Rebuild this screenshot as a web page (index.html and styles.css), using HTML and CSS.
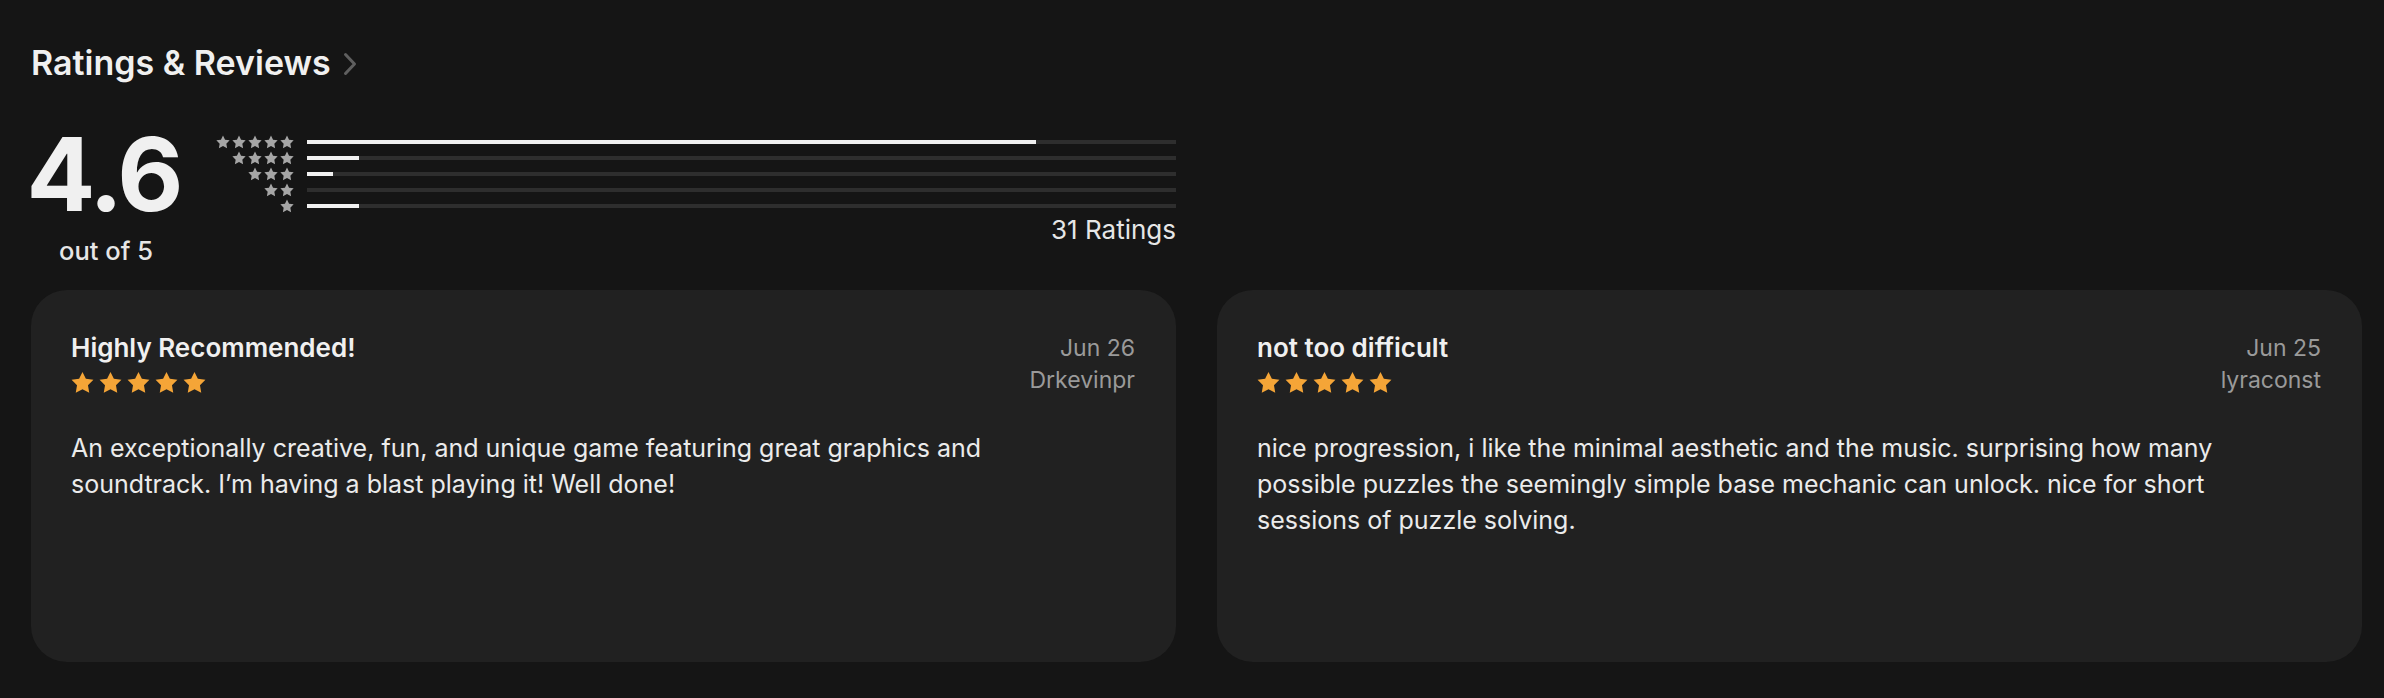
FILE: index.html
```html
<!DOCTYPE html>
<html>
  <head>
    <title>Ratings &amp; Reviews</title>
    <link rel="stylesheet" href="styles.css">
  </head>
  <body>
    <!-- header -->
    <h2 class="section-title">
      Ratings &amp; Reviews
      <svg class="chevron" width="14" height="24" viewBox="0 0 14 24">
        <polyline points="2.5,2.5 11.5,12 2.5,21.5" fill="none" stroke="#5f5f5f" stroke-width="3" stroke-linecap="round" stroke-linejoin="round"/>
      </svg>
    </h2>

    <!-- summary -->
    <div class="summary">
      <div class="score">
        <div class="score-value">4.6</div>
        <div class="score-label">out of 5</div>
      </div>
      <div class="histogram">
        <div class="hist-row">
          <div class="hist-stars">
            <svg class="g-star" viewBox="0 0 24 24"><path d="M12 1l3.53 7.15 7.88.99-5.7 5.71 1.34 7.86L12 19l-7.05 3.71 1.34-7.86-5.7-5.71 7.88-.99z"/></svg>
            <svg class="g-star" viewBox="0 0 24 24"><path d="M12 1l3.53 7.15 7.88.99-5.7 5.71 1.34 7.86L12 19l-7.05 3.71 1.34-7.86-5.7-5.71 7.88-.99z"/></svg>
            <svg class="g-star" viewBox="0 0 24 24"><path d="M12 1l3.53 7.15 7.88.99-5.7 5.71 1.34 7.86L12 19l-7.05 3.71 1.34-7.86-5.7-5.71 7.88-.99z"/></svg>
            <svg class="g-star" viewBox="0 0 24 24"><path d="M12 1l3.53 7.15 7.88.99-5.7 5.71 1.34 7.86L12 19l-7.05 3.71 1.34-7.86-5.7-5.71 7.88-.99z"/></svg>
            <svg class="g-star" viewBox="0 0 24 24"><path d="M12 1l3.53 7.15 7.88.99-5.7 5.71 1.34 7.86L12 19l-7.05 3.71 1.34-7.86-5.7-5.71 7.88-.99z"/></svg>
          </div>
          <div class="bar"><div class="bar-fill" style="width: 83.9%;"></div></div>
        </div>
        <div class="hist-row">
          <div class="hist-stars">
            <svg class="g-star" viewBox="0 0 24 24"><path d="M12 1l3.53 7.15 7.88.99-5.7 5.71 1.34 7.86L12 19l-7.05 3.71 1.34-7.86-5.7-5.71 7.88-.99z"/></svg>
            <svg class="g-star" viewBox="0 0 24 24"><path d="M12 1l3.53 7.15 7.88.99-5.7 5.71 1.34 7.86L12 19l-7.05 3.71 1.34-7.86-5.7-5.71 7.88-.99z"/></svg>
            <svg class="g-star" viewBox="0 0 24 24"><path d="M12 1l3.53 7.15 7.88.99-5.7 5.71 1.34 7.86L12 19l-7.05 3.71 1.34-7.86-5.7-5.71 7.88-.99z"/></svg>
            <svg class="g-star" viewBox="0 0 24 24"><path d="M12 1l3.53 7.15 7.88.99-5.7 5.71 1.34 7.86L12 19l-7.05 3.71 1.34-7.86-5.7-5.71 7.88-.99z"/></svg>
          </div>
          <div class="bar"><div class="bar-fill" style="width: 6.0%;"></div></div>
        </div>
        <div class="hist-row">
          <div class="hist-stars">
            <svg class="g-star" viewBox="0 0 24 24"><path d="M12 1l3.53 7.15 7.88.99-5.7 5.71 1.34 7.86L12 19l-7.05 3.71 1.34-7.86-5.7-5.71 7.88-.99z"/></svg>
            <svg class="g-star" viewBox="0 0 24 24"><path d="M12 1l3.53 7.15 7.88.99-5.7 5.71 1.34 7.86L12 19l-7.05 3.71 1.34-7.86-5.7-5.71 7.88-.99z"/></svg>
            <svg class="g-star" viewBox="0 0 24 24"><path d="M12 1l3.53 7.15 7.88.99-5.7 5.71 1.34 7.86L12 19l-7.05 3.71 1.34-7.86-5.7-5.71 7.88-.99z"/></svg>
          </div>
          <div class="bar"><div class="bar-fill" style="width: 3.0%;"></div></div>
        </div>
        <div class="hist-row">
          <div class="hist-stars">
            <svg class="g-star" viewBox="0 0 24 24"><path d="M12 1l3.53 7.15 7.88.99-5.7 5.71 1.34 7.86L12 19l-7.05 3.71 1.34-7.86-5.7-5.71 7.88-.99z"/></svg>
            <svg class="g-star" viewBox="0 0 24 24"><path d="M12 1l3.53 7.15 7.88.99-5.7 5.71 1.34 7.86L12 19l-7.05 3.71 1.34-7.86-5.7-5.71 7.88-.99z"/></svg>
          </div>
          <div class="bar"><div class="bar-fill" style="width: 0%;"></div></div>
        </div>
        <div class="hist-row">
          <div class="hist-stars">
            <svg class="g-star" viewBox="0 0 24 24"><path d="M12 1l3.53 7.15 7.88.99-5.7 5.71 1.34 7.86L12 19l-7.05 3.71 1.34-7.86-5.7-5.71 7.88-.99z"/></svg>
          </div>
          <div class="bar"><div class="bar-fill" style="width: 6.0%;"></div></div>
        </div>
        <div class="rating-count">31 Ratings</div>
      </div>
    </div>

    <!-- reviews -->
    <div class="reviews">
      <div class="review-card">
        <div class="review-head">
          <div>
            <h3 class="review-title">Highly Recommended!</h3>
            <div class="review-stars">
              <svg class="o-star" viewBox="0 0 24 24"><path d="M12 1l3.53 7.15 7.88.99-5.7 5.71 1.34 7.86L12 19l-7.05 3.71 1.34-7.86-5.7-5.71 7.88-.99z"/></svg>
              <svg class="o-star" viewBox="0 0 24 24"><path d="M12 1l3.53 7.15 7.88.99-5.7 5.71 1.34 7.86L12 19l-7.05 3.71 1.34-7.86-5.7-5.71 7.88-.99z"/></svg>
              <svg class="o-star" viewBox="0 0 24 24"><path d="M12 1l3.53 7.15 7.88.99-5.7 5.71 1.34 7.86L12 19l-7.05 3.71 1.34-7.86-5.7-5.71 7.88-.99z"/></svg>
              <svg class="o-star" viewBox="0 0 24 24"><path d="M12 1l3.53 7.15 7.88.99-5.7 5.71 1.34 7.86L12 19l-7.05 3.71 1.34-7.86-5.7-5.71 7.88-.99z"/></svg>
              <svg class="o-star" viewBox="0 0 24 24"><path d="M12 1l3.53 7.15 7.88.99-5.7 5.71 1.34 7.86L12 19l-7.05 3.71 1.34-7.86-5.7-5.71 7.88-.99z"/></svg>
            </div>
          </div>
          <div class="review-meta">
            <div>Jun 26</div>
            <div>Drkevinpr</div>
          </div>
        </div>
        <p class="review-text">An exceptionally creative, fun, and unique game featuring great graphics and soundtrack. I’m having a blast playing it! Well done!</p>
      </div>

      <div class="review-card">
        <div class="review-head">
          <div>
            <h3 class="review-title">not too difficult</h3>
            <div class="review-stars">
              <svg class="o-star" viewBox="0 0 24 24"><path d="M12 1l3.53 7.15 7.88.99-5.7 5.71 1.34 7.86L12 19l-7.05 3.71 1.34-7.86-5.7-5.71 7.88-.99z"/></svg>
              <svg class="o-star" viewBox="0 0 24 24"><path d="M12 1l3.53 7.15 7.88.99-5.7 5.71 1.34 7.86L12 19l-7.05 3.71 1.34-7.86-5.7-5.71 7.88-.99z"/></svg>
              <svg class="o-star" viewBox="0 0 24 24"><path d="M12 1l3.53 7.15 7.88.99-5.7 5.71 1.34 7.86L12 19l-7.05 3.71 1.34-7.86-5.7-5.71 7.88-.99z"/></svg>
              <svg class="o-star" viewBox="0 0 24 24"><path d="M12 1l3.53 7.15 7.88.99-5.7 5.71 1.34 7.86L12 19l-7.05 3.71 1.34-7.86-5.7-5.71 7.88-.99z"/></svg>
              <svg class="o-star" viewBox="0 0 24 24"><path d="M12 1l3.53 7.15 7.88.99-5.7 5.71 1.34 7.86L12 19l-7.05 3.71 1.34-7.86-5.7-5.71 7.88-.99z"/></svg>
            </div>
          </div>
          <div class="review-meta">
            <div>Jun 25</div>
            <div>lyraconst</div>
          </div>
        </div>
        <p class="review-text">nice progression, i like the minimal aesthetic and the music. surprising how many possible puzzles the seemingly simple base mechanic can unlock. nice for short sessions of puzzle solving.</p>
      </div>
    </div>
  </body>
</html>
```

FILE: styles.css
```css
body{
  margin: 0;
  padding: 43px 22px 35px 31px;
  background-color: rgb(21, 21, 21);
  color: rgb(240, 240, 240);
  font-family: Inter, "Noto Sans", sans-serif;
}
.section-title{
  margin: 0;
  display: flex;
  align-items: center;
  gap: 12px;
  font-size: 34px;
  line-height: 40px;
  font-weight: 600;
  color: rgb(240, 240, 240);
}
.chevron{
  margin-top: 2px;
}
/* summary */
.summary{
  display: flex;
  width: 1145px;
  margin-top: 40px;
}
.score{
  width: 150px;
  text-align: center;
}
.score-value{
  margin-left: -5px;
  font-size: 102px;
  line-height: 102px;
  font-weight: 700;
  letter-spacing: -3px;
  color: rgb(240, 240, 240);
}
.score-label{
  margin-top: 12px;
  font-size: 25.5px;
  line-height: 28px;
  font-weight: 500;
  color: rgb(230, 230, 230);
}
.histogram{
  flex: 1;
  padding-top: 11px;
}
.hist-row{
  display: grid;
  grid-template-columns: 113px 1fr;
  column-gap: 13px;
  align-items: center;
  height: 16px;
}
.hist-stars{
  display: flex;
  justify-content: flex-end;
  gap: 2px;
}
.g-star{
  width: 14px;
  height: 14px;
  fill: rgb(166, 166, 166);
}
.bar{
  height: 4px;
  background-color: rgb(46, 46, 46);
}
.bar-fill{
  height: 4px;
  background-color: rgb(240, 240, 240);
}
.rating-count{
  margin-top: 1px;
  text-align: right;
  font-size: 26px;
  line-height: 30px;
  color: rgb(230, 230, 230);
}
/* reviews */
.reviews{
  display: grid;
  grid-template-columns: 1145px 1145px;
  column-gap: 41px;
  margin-top: 25px;
}
.review-card{
  height: 372px;
  box-sizing: border-box;
  padding: 42px 41px 0 40px;
  background-color: rgb(33, 33, 33);
  border-radius: 36px;
}
.review-head{
  display: flex;
  justify-content: space-between;
}
.review-title{
  margin: 0;
  font-size: 26px;
  line-height: 32px;
  font-weight: 600;
  color: rgb(240, 240, 240);
}
.review-stars{
  display: flex;
  gap: 5px;
  margin-top: 7px;
}
.o-star{
  width: 23px;
  height: 23px;
  fill: rgb(245, 165, 55);
}
.review-meta{
  text-align: right;
  font-size: 23px;
  line-height: 32px;
  color: rgb(154, 154, 154);
}
.review-text{
  margin: 34px 24px 0 0;
  font-size: 25px;
  line-height: 36px;
  color: rgb(235, 235, 235);
}
```
